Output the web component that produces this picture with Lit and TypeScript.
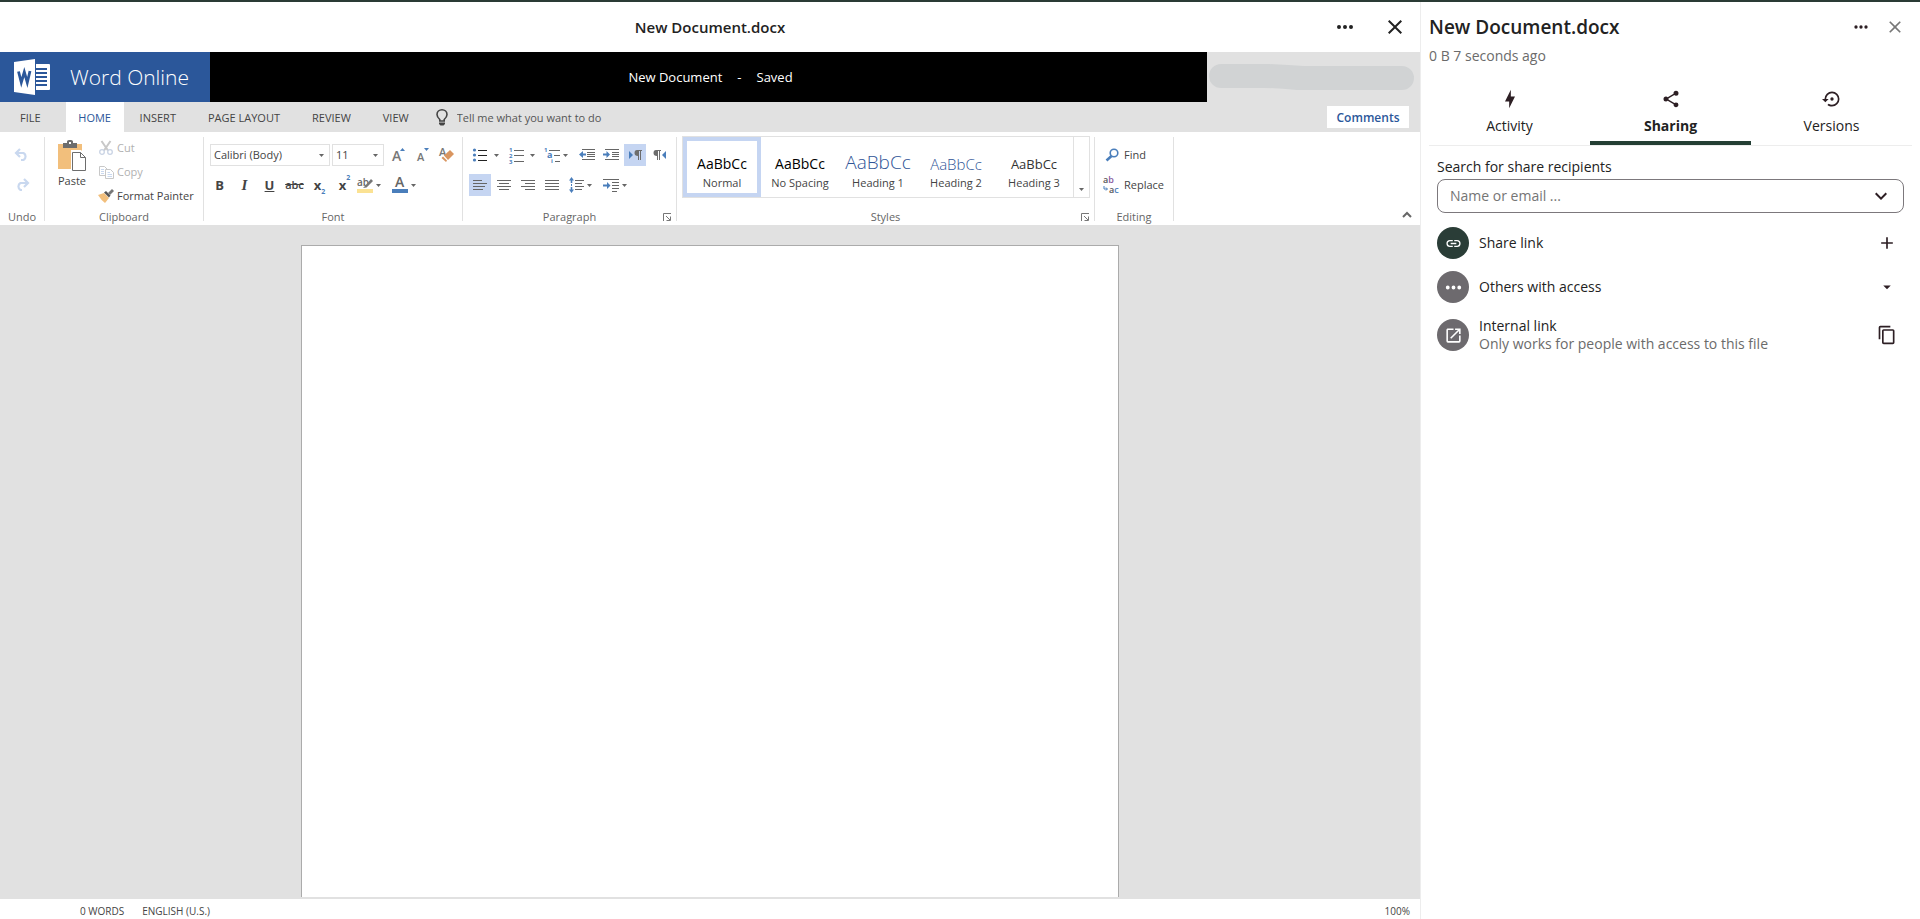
import { LitElement, html, svg, css } from "lit";
import { customElement, property } from "lit/decorators.js";

const mdi: Record<string, string> = {
  dots: "M16,12A2,2 0 0,1 18,10A2,2 0 0,1 20,12A2,2 0 0,1 18,14A2,2 0 0,1 16,12M10,12A2,2 0 0,1 12,10A2,2 0 0,1 14,12A2,2 0 0,1 12,14A2,2 0 0,1 10,12M4,12A2,2 0 0,1 6,10A2,2 0 0,1 8,12A2,2 0 0,1 6,14A2,2 0 0,1 4,12Z",
  close: "M19,6.41L17.59,5L12,10.59L6.41,5L5,6.41L10.59,12L5,17.59L6.41,19L12,13.41L17.59,19L19,17.59L13.41,12L19,6.41Z",
  bolt: "M11 15H6L13 1V9H18L11 23V15Z",
  share: "M18,16.08C17.24,16.08 16.56,16.38 16.04,16.85L8.91,12.7C8.96,12.47 9,12.24 9,12C9,11.76 8.96,11.53 8.91,11.3L15.96,7.19C16.5,7.69 17.21,8 18,8A3,3 0 0,0 21,5A3,3 0 0,0 18,2A3,3 0 0,0 15,5C15,5.24 15.04,5.47 15.09,5.7L8.04,9.81C7.5,9.31 6.79,9 6,9A3,3 0 0,0 3,12A3,3 0 0,0 6,15C6.79,15 7.5,14.69 8.04,14.19L15.16,18.34C15.11,18.55 15.08,18.77 15.08,19C15.08,20.61 16.39,21.91 18,21.91C19.61,21.91 20.92,20.61 20.92,19A2.92,2.92 0 0,0 18,16.08Z",
  restore: "M12,3A9,9 0 0,0 3,12H0L4,16L8,12H5A7,7 0 0,1 12,5A7,7 0 0,1 19,12A7,7 0 0,1 12,19C10.5,19 9.09,18.5 7.94,17.7L6.5,19.14C8.04,20.3 9.94,21 12,21A9,9 0 0,0 21,12A9,9 0 0,0 12,3M14,12A2,2 0 0,0 12,10A2,2 0 0,0 10,12A2,2 0 0,0 12,14A2,2 0 0,0 14,12Z",
  link: "M3.9,12C3.9,10.29 5.29,8.9 7,8.9H11V7H7A5,5 0 0,0 2,12A5,5 0 0,0 7,17H11V15.1H7C5.29,15.1 3.9,13.71 3.9,12M8,13H16V11H8V13M17,7H13V8.9H17C18.71,8.9 20.1,10.29 20.1,12C20.1,13.71 18.71,15.1 17,15.1H13V17H17A5,5 0 0,0 22,12A5,5 0 0,0 17,7Z",
  open: "M14,3V5H17.59L7.76,14.83L9.17,16.24L19,6.41V10H21V3M19,19H5V5H12V3H5C3.89,3 3,3.9 3,5V19A2,2 0 0,0 5,21H19A2,2 0 0,0 21,19V12H19V19Z",
  copy: "M19,21H8V7H19M19,5H8A2,2 0 0,0 6,7V21A2,2 0 0,0 8,23H19A2,2 0 0,0 21,21V7A2,2 0 0,0 19,5M16,1H4A2,2 0 0,0 2,3V17H4V3H16V1Z",
  plus: "M19,13H13V19H11V13H5V11H11V5H13V11H19V13Z",
  menuDown: "M7,10L12,15L17,10H7Z",
  chevron: "M7.41,8.58L12,13.17L16.59,8.58L18,10L12,16L6,10L7.41,8.58Z",
};

const icon = (name: string, size: number) =>
  html`<svg width=${size} height=${size} viewBox="0 0 24 24" fill="currentColor" aria-hidden="true"><path d=${mdi[name]}></path></svg>`;

const reset = css`
  *, *::before, *::after { box-sizing: border-box; }
  button, input, select { font: inherit; color: inherit; margin: 0; padding: 0; border: 0; background: none; border-radius: 0; outline: none; }
  button { display: flex; align-items: center; justify-content: center; cursor: pointer; white-space: nowrap; }
  a { color: inherit; text-decoration: none; }
  svg { display: block; flex: none; overflow: visible; }
`;

const ink = "#6d6d6d";
const blue = "#4a7ebb";
const soft = "#c9d8ef";

const rows = (x: number[][], color = "#666") =>
  x.map(([a, y, w]) => svg`<rect x=${a} y=${y} width=${w} height="1" fill=${color}></rect>`);

const caret = html`<svg width="5" height="3" viewBox="0 0 5 3" aria-hidden="true"><path d="M0 0H5L2.500 3Z" fill="#666"></path></svg>`;

const art = {
  undo: html`<svg width="16" height="14" viewBox="0 0 16 14"><path d="M2 5H9.500A4 4 0 0 1 9.500 12H7M6 1L2 5L6 9" fill="none" stroke=${soft} stroke-width="2.200"></path></svg>`,
  redo: html`<svg width="16" height="14" viewBox="0 0 16 14"><path d="M14 5H6.500A4 4 0 0 0 6.500 12H8M10 1L14 5L10 9" fill="none" stroke=${soft} stroke-width="2.200"></path></svg>`,
  paste: html`<svg width="30" height="32" viewBox="0 0 30 32">
    <path d="M1 4H25V29H1Z" fill="#f2bf7c"></path>
    <path d="M6 3H10V1.500Q10 0 12 0H14Q16 0 16 1.500V3H20V8H6Z" fill="#6d6d6d"></path><rect x="12" y="2" width="2" height="2" fill="#fff"></rect>
    <path d="M14 10H24L30 16V32H14Z" fill="#fff"></path>
    <path d="M15.500 12.500H23.500L28.500 17.500V30.500H15.500ZM23.500 12.500V17.500H28.500" fill="#fff" stroke="#6d6d6d"></path></svg>`,
  cut: html`<svg width="14" height="16" viewBox="0 0 14 16" fill="none" stroke="#c8c8c8"><path d="M2.500 1L9 10.500M11.500 1L5 10.500" stroke-width="2"></path><circle cx="3" cy="12" r="2.300" stroke="#c9d3e4" stroke-width="1.300"></circle><circle cx="11" cy="12" r="2.300" stroke="#c9d3e4" stroke-width="1.300"></circle></svg>`,
  copy: html`<svg width="15" height="15" viewBox="0 0 15 15" fill="#fff" stroke="#c8c8c8"><path d="M.5 1.500H5.500L8.500 4.500V10.500H.5Z"></path><path d="M6.500 4.500H11.500L14.500 7.500V13.500H6.500Z"></path><path d="M2 4.500H5M2 6.500H5M2 8.500H5M8.500 7.500H11M8.500 9.500H13M8.500 11.500H13" stroke="#c9d8ef"></path></svg>`,
  painter: html`<svg width="16" height="14" viewBox="0 0 16 14"><path d="M0 6L6 4L11 9L7 14Q3 11 0 6Z" fill="#f2bf7c"></path><path d="M6 3.500L8 2L12.500 6.500L11 8.500Z" fill="#555"></path><path d="M10 4L14 0L16 2L12 6Z" fill="#777"></path></svg>`,
  grow: html`<svg width="14" height="14" viewBox="0 0 14 14"><text x="0" y="13" font-size="14" font-weight="600" fill="#777">A</text><path d="M8 3L10.500 0L13 3Z" fill=${blue}></path></svg>`,
  shrink: html`<svg width="14" height="14" viewBox="0 0 14 14"><text x="1" y="13" font-size="11" font-weight="600" fill="#777">A</text><path d="M8 0H13L10.500 3Z" fill=${blue}></path></svg>`,
  clear: html`<svg width="16" height="16" viewBox="0 0 16 16"><text x="0" y="9" font-size="11" font-weight="600" fill="#777">A</text><path d="M5 8.500L11 3L15 7L9 13Z" fill="#d9955f"></path><path d="M4 9.500L8 13.500L7 15L2.500 11Z" fill="#d9955f"></path></svg>`,
  highlight: html`<svg width="16" height="16" viewBox="0 0 16 16"><text x="0" y="9" font-size="10" font-weight="600" fill="#666">ab</text><path d="M8 9L14 2L16 4L9.500 10.500L6 11Z" fill="#777"></path><rect y="12" width="16" height="4" fill="#fbe293"></rect></svg>`,
  color: html`<svg width="16" height="16" viewBox="0 0 16 16"><text x="3" y="10" font-size="14" font-weight="600" fill="#666">A</text><rect y="12" width="16" height="4" fill=${blue}></rect></svg>`,
  bullets: html`<svg width="14" height="14" viewBox="0 0 14 14"><g fill=${blue}><circle cx="1.500" cy="2" r="1.600"></circle><circle cx="1.500" cy="7" r="1.600"></circle><circle cx="1.500" cy="12" r="1.600"></circle></g>${rows([[5, 2, 9], [5, 7, 9], [5, 12, 9]], "#222")}</svg>`,
  numbers: html`<svg width="15" height="17" viewBox="0 0 15 17"><g font-size="6" font-weight="700" fill=${blue}><text x="0" y="5">1</text><text x="0" y="11">2</text><text x="0" y="17">3</text></g>${rows([[5, 3, 10], [5, 8, 10], [5, 14, 10]])}</svg>`,
  multi: html`<svg width="16" height="16" viewBox="0 0 16 16"><g font-weight="700" fill=${blue}><text x="0" y="5" font-size="6">1</text><text x="3" y="11" font-size="9">a</text><text x="7" y="16" font-size="6">i</text></g>${rows([[5, 3, 11], [10, 8, 6], [11, 14, 5]])}</svg>`,
  outdent: html`<svg width="16" height="12" viewBox="0 0 16 12">${rows([[3, 0, 13], [8, 3, 8], [8, 5, 8], [8, 7, 8], [3, 10, 13]])}<path d="M0 5.500L4 2V4.500H7V6.500H4V9Z" fill=${blue}></path></svg>`,
  indent: html`<svg width="16" height="12" viewBox="0 0 16 12">${rows([[2, 0, 14], [9, 3, 7], [9, 5, 7], [9, 7, 7], [2, 10, 14]])}<path d="M7 5.500L3.500 2V4.500H0V6.500H3.500V9Z" fill=${blue}></path></svg>`,
  ltr: html`<svg width="13" height="10" viewBox="0 0 13 10"><path d="M0 1L4 5L0 9Z" fill=${blue}></path><path d="M8 0H13V1H12V10H11V1H10V10H9V6Q5.500 6 5.500 3Q5.500 0 8 0Z" fill=${ink}></path></svg>`,
  rtl: html`<svg width="13" height="10" viewBox="0 0 13 10"><path d="M13 1L9 5L13 9Z" fill=${blue}></path><path d="M3 0H8V1H7V10H6V1H5V10H4V6Q.5 6 .5 3Q.5 0 3 0Z" fill=${ink}></path></svg>`,
  left: html`<svg width="14" height="11" viewBox="0 0 14 11">${rows([[0, 0, 9], [0, 3, 14], [0, 6, 12], [0, 9, 10]])}</svg>`,
  center: html`<svg width="14" height="11" viewBox="0 0 14 11">${rows([[0, 0, 14], [2, 3, 10], [0, 6, 14], [2, 9, 10]])}</svg>`,
  right: html`<svg width="14" height="11" viewBox="0 0 14 11">${rows([[0, 0, 14], [4, 3, 10], [0, 6, 14], [4, 9, 10]])}</svg>`,
  justify: html`<svg width="14" height="11" viewBox="0 0 14 11">${rows([[0, 0, 14], [0, 3, 14], [0, 6, 14], [0, 9, 14]])}</svg>`,
  spacing: html`<svg width="15" height="16" viewBox="0 0 15 16">${rows([[6, 3, 9], [6, 6, 7], [6, 9, 9], [6, 12, 7]])}<path d="M2.500 0L5 3.500H3.300V6H1.700V3.500H0ZM2.500 16L5 12.500H3.300V10H1.700V12.500H0Z" fill=${blue}></path><rect x="2" y="7" width="1" height="2" fill=${blue}></rect></svg>`,
  special: html`<svg width="16" height="13" viewBox="0 0 16 13">${rows([[0, 0, 16], [9, 3, 7], [9, 6, 7], [9, 9, 7], [9, 12, 5]])}<path d="M7.500 6.500L4 3V5.500H0V7.500H4V10Z" fill=${blue}></path></svg>`,
  launcher: html`<svg width="9" height="9" viewBox="0 0 9 9"><path d="M.5 8V.5H8M3 3L7 7M7.500 3.500V7.500H3.500" fill="none" stroke="#777"></path></svg>`,
  find: html`<svg width="14" height="14" viewBox="0 0 14 14"><circle cx="9" cy="5" r="3.800" fill="none" stroke=${blue} stroke-width="1.600"></circle><path d="M6.500 8L1.500 12.500" stroke=${blue} stroke-width="2.600"></path></svg>`,
  replace: html`<svg width="17" height="17" viewBox="0 0 17 17"><g font-size="9" font-weight="600"><text x="0" y="6" fill="#555">a<tspan fill="#8a5aa0">b</tspan></text><text x="6" y="16" fill="#555">a<tspan fill=${blue}>c</tspan></text></g><path d="M1 9V12H4M3 10.500L4.500 12L3 13.500" fill="none" stroke=${blue}></path></svg>`,
  bulb: html`<svg width="12" height="17" viewBox="0 0 12 17"><path d="M3.800 12V10.500Q1 8 1 5.500A5 4.700 0 0 1 11 5.500Q11 8 8.200 10.500V12Z" fill="none" stroke="#444" stroke-width="1.600"></path><path d="M3 13.500H9V14.500Q8.500 16 7.500 16.500H4.500Q3.500 16 3 14.500Z" fill="#444"></path></svg>`,
  up: html`<svg width="10" height="6" viewBox="0 0 10 6"><path d="M1 5L5 1L9 5" fill="none" stroke="#666" stroke-width="2"></path></svg>`,
  word: html`<svg width="36" height="36" viewBox="0 0 36 36"><path d="M0 3L21 0V36L0 33Z" fill="#fff"></path><path d="M22 5H35Q36 5 36 6V30Q36 31 35 31H22Z" fill="#fff"></path><path d="M22 10H33M22 14H33M22 18H33M22 22H33M22 26H33" stroke="#2b579a" stroke-width="2"></path><path d="M4.500 12.500L7.300 23.500L10.300 13L13.300 23.500L16 12" fill="none" stroke="#2b579a" stroke-width="2.800"></path></svg>`,
};

@customElement("word-ribbon")
class WordRibbon extends LitElement {
  static styles = [reset, css`
    :host { display: flex; height: 93px; padding: 5px 0 4px; background: #fff; color: #444; font-size: 11px; line-height: 16px; }
    .group { display: flex; flex-direction: column; border-right: 1px solid #e1e1e1; flex: none; }
    .undo { width: 45px; } .clipboard { width: 159px; } .font { width: 259px; }
    .paragraph { width: 214px; } .styles { width: 418px; } .editing { width: 79px; }
    .body { flex: 1; display: flex; flex-direction: column; gap: 8px; padding-top: 7px; }
    .foot { display: flex; height: 8px; align-items: center; color: #666; }
    .name { flex: 1; text-align: center; font-weight: 400; }
    .corner { margin: 0 4px 0 -13px; }
    .line { display: flex; align-items: center; height: 22px; }
    .cell { width: 24px; height: 22px; }
    .tool { width: 25px; height: 22px; }
    .on { background: #c5d5f2; width: 22px; margin: 0 1px; }
    .more { width: 12px; height: 22px; margin: 0 2px 0 -2px; }
    .tight { margin: 0 4px 0 -5px; }
    .bold { font-weight: 700; font-size: 13px; }
    .ital { font-family: "Liberation Serif", serif; font-style: italic; font-weight: 700; font-size: 15px; }
    .under { text-decoration: underline; }
    .strike { text-decoration: line-through; font-weight: 600; }
    .mini { font-size: 7px; color: #4a7ebb; line-height: 8px; }
    .low { align-self: flex-end; } .high { align-self: flex-start; }
    .undo .line { justify-content: center; }
    .clipboard .body { flex-direction: row; gap: 0; padding: 0 0 0 11px; }
    .paste { flex-direction: column; gap: 1px; width: 32px; align-self: flex-start; padding-top: 3px; }
    .stack { display: flex; flex-direction: column; gap: 2px; padding: 0 0 0 10px; }
    .act { height: 22px; gap: 3px; justify-content: flex-start; }
    .pic { width: 16px; display: flex; justify-content: center; }
    .off { color: #b1b1b1; }
    .font .body { padding-left: 6px; }
    .font .tools { margin-left: -3px; }
    .combo { display: flex; align-items: center; height: 22px; border: 1px solid #e1e1e1; margin-right: 2px; }
    .combo select { appearance: none; flex: 1; min-width: 0; padding-left: 3px; height: 20px; font-size: 11px; }
    .combo svg { margin: 0 5px; }
    .face { width: 120px; } .size { width: 52px; margin-right: 3px; }
    .split { display: flex; align-items: center; gap: 3px; height: 22px; margin-right: 11px; }
    .paragraph .body { padding-left: 5px; }
    .styles .body { padding: 0 4px 0 5px; flex: none; }
    .gallery { display: flex; height: 62px; border: 1px solid #e1e1e1; margin-top: -1px; }
    .style { width: 77px; flex: 1; flex-direction: column; border: 4px solid transparent; gap: 1px; justify-content: flex-end; padding-bottom: 2px; }
    .picked { border-color: #c5d5f2; }
    .sample { font-size: 14px; line-height: 20px; color: #000; }
    .h1 { font-size: 19px; line-height: 24px; color: #2f5496; font-weight: 300; }
    .h2 { font-size: 15px; color: #2f5496; font-weight: 300; }
    .h3 { font-size: 13px; color: #333; }
    .drop { width: 16px; border-left: 1px solid #e1e1e1; align-items: flex-end; padding-bottom: 6px; }
    .styles .foot { margin-top: auto; }
    .editing .body { padding-left: 8px; }
    .seek { height: 22px; gap: 4px; justify-content: flex-start; }
    .seek .pic { width: 17px; }
    .fold { margin: auto 8px 3px auto; }
    svg text { font-family: "Open Sans", sans-serif; }
  `];

  private foot(name: string, launcher = false) {
    return html`<div class="foot"><span class="name">${name}</span>${launcher ? html`<button class="corner" aria-label="${name} settings">${art.launcher}</button>` : ""}</div>`;
  }
  private cell(name: string, pic: unknown, on = false) {
    return html`<button class="cell ${on ? "on" : ""}" aria-label=${name}>${pic}</button>`;
  }
  private more(name: string, tight = false) {
    return html`<button class="more ${tight ? "tight" : ""}" aria-label="${name} options">${caret}</button>`;
  }

  render() {
    const styles = [["Normal", ""], ["No Spacing", ""], ["Heading 1", "h1"], ["Heading 2", "h2"], ["Heading 3", "h3"]];
    return html`
      <div class="group undo">
        <div class="body">
          <div class="line">${this.cell("Undo", art.undo)}</div>
          <div class="line">${this.cell("Redo", art.redo)}</div>
        </div>${this.foot("Undo")}
      </div>
      <div class="group clipboard">
        <div class="body">
          <button class="paste">${art.paste}Paste</button>
          <div class="stack">
            <button class="act off"><span class="pic">${art.cut}</span>Cut</button>
            <button class="act off"><span class="pic">${art.copy}</span>Copy</button>
            <button class="act"><span class="pic">${art.painter}</span>Format Painter</button>
          </div>
        </div>${this.foot("Clipboard")}
      </div>
      <div class="group font">
        <div class="body">
          <div class="line">
            <div class="combo face"><select aria-label="Font"><option>Calibri (Body)</option></select>${caret}</div>
            <div class="combo size"><select aria-label="Font size"><option>11</option></select>${caret}</div>
            ${this.cell("Grow font", art.grow)}${this.cell("Shrink font", art.shrink)}${this.cell("Clear formatting", art.clear)}
          </div>
          <div class="line tools">
            <button class="tool bold">B</button><button class="tool ital">I</button><button class="tool bold under">U</button>
            <button class="tool strike">abc</button>
            <button class="tool bold">x<span class="mini low">2</span></button><button class="tool bold">x<span class="mini high">2</span></button>
            <button class="split" aria-label="Highlight colour">${art.highlight}${caret}</button>
            <button class="split" aria-label="Font colour">${art.color}${caret}</button>
          </div>
        </div>${this.foot("Font")}
      </div>
      <div class="group paragraph">
        <div class="body">
          <div class="line">
            ${this.cell("Bullets", art.bullets)}${this.more("Bullets")}
            ${this.cell("Numbering", art.numbers)}${this.more("Numbering")}
            ${this.cell("Multilevel list", art.multi)}${this.more("Multilevel list", true)}
            ${this.cell("Decrease indent", art.outdent)}${this.cell("Increase indent", art.indent)}
            ${this.cell("Left-to-right", art.ltr, true)}${this.cell("Right-to-left", art.rtl)}
          </div>
          <div class="line">
            ${this.cell("Align left", art.left, true)}${this.cell("Center", art.center)}${this.cell("Align right", art.right)}
            ${this.cell("Justify", art.justify)}${this.cell("Line spacing", art.spacing)}${this.more("Line spacing", true)}
            ${this.cell("Special indent", art.special)}${this.more("Special indent", true)}
          </div>
        </div>${this.foot("Paragraph", true)}
      </div>
      <div class="group styles">
        <div class="body">
          <div class="gallery">
            ${styles.map(([name, kind], i) => html`<button class="style ${i ? "" : "picked"}"><span class="sample ${kind}">AaBbCc</span><span>${name}</span></button>`)}
            <button class="drop" aria-label="More styles">${caret}</button>
          </div>
        </div>${this.foot("Styles", true)}
      </div>
      <div class="group editing">
        <div class="body">
          <button class="seek"><span class="pic">${art.find}</span>Find</button>
          <button class="seek"><span class="pic">${art.replace}</span>Replace</button>
        </div>${this.foot("Editing")}
      </div>
      <button class="fold" aria-label="Collapse ribbon">${art.up}</button>`;
  }
}

@customElement("share-row")
class ShareRow extends LitElement {
  @property() icon = "link";
  @property() heading = "";
  @property() detail = "";
  @property() action = "plus";
  @property({ type: Boolean, reflect: true }) primary = false;
  static styles = [reset, css`
    :host { display: flex; align-items: center; gap: 10px; line-height: 18px; min-height: 32px; }
    .badge { width: 32px; height: 32px; border-radius: 50%; background: #6d6a6e; color: #fff; display: flex; align-items: center; justify-content: center; flex: none; }
    :host([primary]) .badge { background: #2a3d37; }
    .text { flex: 1; display: flex; flex-direction: column; color: #222; }
    .detail { color: #6b6b6b; }
    .do { width: 34px; height: 32px; color: #2d1f24; }
  `];
  render() {
    const sizes: Record<string, number> = { link: 17, dots: 23, open: 19, menuDown: 18, plus: 20, copy: 20 };
    return html`<span class="badge">${icon(this.icon, sizes[this.icon])}</span>
      <span class="text"><span>${this.heading}</span>${this.detail ? html`<span class="detail">${this.detail}</span>` : ""}</span>
      <button class="do" aria-label="${this.heading} action">${icon(this.action, sizes[this.action])}</button>`;
  }
}

@customElement("share-panel")
class SharePanel extends LitElement {
  static styles = [reset, css`
    :host { display: flex; flex-direction: column; width: 500px; flex: none; border-left: 1px solid #ededed; padding: 0 8px; background: #fff; color: #222; font-size: 14px; line-height: 18px; }
    .top { display: flex; align-items: center; height: 38px; margin-top: 6px; }
    h2 { flex: 1; margin: 0; font-size: 19px; font-weight: 600; line-height: 24px; }
    .act { width: 34px; height: 34px; color: #2d1f24; }
    .dim { color: #777; }
    .meta { color: #6b6b6b; line-height: 20px; }
    .tabs { display: flex; border-bottom: 1px solid #ededed; margin-top: 22px; }
    .tab { flex: 1; flex-direction: column; gap: 8px; padding: 0 0 6px; height: 57px; border-bottom: 4px solid transparent; color: #222; }
    .tab svg { color: #2d1f24; }
    .active { font-weight: 700; border-color: #243f34; }
    .content { padding: 11px 8px; display: flex; flex-direction: column; }
    label { line-height: 20px; }
    .field { display: flex; align-items: center; height: 34px; border: 1px solid #7c787c; border-radius: 8px; padding: 0 10px 0 12px; margin: 2px 0 14px; }
    .field input { flex: 1; min-width: 0; }
    .field input::placeholder { color: #757575; opacity: 1; }
    .field button { color: #2d1f24; }
    share-row { margin-bottom: 12px; }
    .last { margin-top: 2px; }
  `];
  render() {
    return html`
      <div class="top"><h2>New Document.docx</h2>
        <button class="act" aria-label="More">${icon("dots", 20)}</button>
        <button class="act dim" aria-label="Close panel">${icon("close", 20)}</button></div>
      <div class="meta">0 B 7 seconds ago</div>
      <div class="tabs" role="tablist">
        <button class="tab" role="tab">${icon("bolt", 20)}Activity</button>
        <button class="tab active" role="tab" aria-selected="true">${icon("share", 20)}Sharing</button>
        <button class="tab" role="tab">${icon("restore", 20)}Versions</button>
      </div>
      <div class="content">
        <label for="who">Search for share recipients</label>
        <div class="field"><input id="who" placeholder="Name or email ..." /><button aria-label="Show options">${icon("chevron", 24)}</button></div>
        <share-row primary icon="link" heading="Share link" action="plus"></share-row>
        <share-row icon="dots" heading="Others with access" action="menuDown"></share-row>
        <share-row class="last" icon="open" heading="Internal link" detail="Only works for people with access to this file" action="copy"></share-row>
      </div>`;
  }
}

@customElement("app-root")
class AppRoot extends LitElement {
  static styles = [reset, css`
    :host { display: flex; height: 100vh; border-top: 2px solid #2a3b35; background: #fff; font-family: "Segoe UI", "Open Sans", sans-serif; box-sizing: border-box; overflow: hidden; }
    main { flex: 1; min-width: 0; display: flex; flex-direction: column; background: #e1e1e1; }
    .viewer { display: grid; grid-template-columns: 1fr auto 1fr; align-items: center; height: 50px; background: #fff; color: #222; font-size: 14px; }
    .viewer h1 { grid-column: 2; margin: 0; font-size: 15px; font-weight: 600; }
    .icons { display: flex; justify-content: flex-end; gap: 16px; padding-right: 8px; }
    .icons button { width: 34px; height: 34px; }
    .banner { display: flex; height: 50px; }
    .brand { width: 210px; background: #2b579a; color: #fff; display: flex; align-items: center; gap: 20px; padding-left: 14px; font-size: 21px; font-weight: 300; white-space: nowrap; }
    .doc { flex: 1; background: #000; color: #fff; display: flex; align-items: center; justify-content: center; gap: 15px; font-size: 13px; padding-left: 4px; }
    .user { width: 213px; display: flex; align-items: center; padding-left: 2px; }
    .tabs { display: flex; height: 30px; align-items: center; color: #444; font-size: 11px; }
    .tab { height: 30px; padding: 0 16px; }
    .file { padding: 0 25px 0 20px; }
    .home { background: #fff; color: #2b579a; width: 58px; padding: 0; }
    .tell { display: flex; align-items: center; gap: 9px; margin-left: 11px; flex: 1; color: #666; }
    .tell input { width: 200px; } .tell input::placeholder { color: #555; opacity: 1; }
    .comments { background: #fff; color: #2b579a; font-weight: 600; font-size: 12px; height: 22px; width: 82px; margin-right: 11px; }
    .canvas { flex: 1; min-height: 0; display: flex; justify-content: center; padding: 20px 16px 2px; }
    .page { width: 818px; background: #fff; border: 1px solid #ababab; border-bottom: 0; }
    footer { display: flex; align-items: center; gap: 18px; height: 20px; padding: 4px 10px 0 80px; background: #fff; color: #444; font-size: 10px; }
    .zoom { margin-left: auto; }
  `];
  render() {
    return html`
      <main>
        <header class="viewer"><h1>New Document.docx</h1>
          <div class="icons"><button aria-label="More actions">${icon("dots", 24)}</button><button aria-label="Close">${icon("close", 24)}</button></div></header>
        <div class="banner">
          <div class="brand">${art.word}<span>Word Online</span></div>
          <div class="doc"><span>New Document</span><span>-</span><span>Saved</span></div>
          <div class="user"><svg width="206" height="28" viewBox="0 0 206 28" aria-hidden="true"><path d="M12 1H60Q80 2 95 3H193A12 12 0 0 1 193 27H88Q70 25 55 25H12A12 12 0 0 1 12 1Z" fill="#d1d3d4"></path></svg></div>
        </div>
        <nav class="tabs">
          <button class="tab file">FILE</button><button class="tab home">HOME</button><button class="tab">INSERT</button>
          <button class="tab">PAGE LAYOUT</button><button class="tab">REVIEW</button><button class="tab">VIEW</button>
          <label class="tell">${art.bulb}<input aria-label="Tell me what you want to do" placeholder="Tell me what you want to do" /></label>
          <button class="comments">Comments</button>
        </nav>
        <word-ribbon></word-ribbon>
        <div class="canvas"><div class="page"></div></div>
        <footer><span>0 WORDS</span><span>ENGLISH (U.S.)</span><span class="zoom">100%</span></footer>
      </main>
      <share-panel></share-panel>`;
  }
}
